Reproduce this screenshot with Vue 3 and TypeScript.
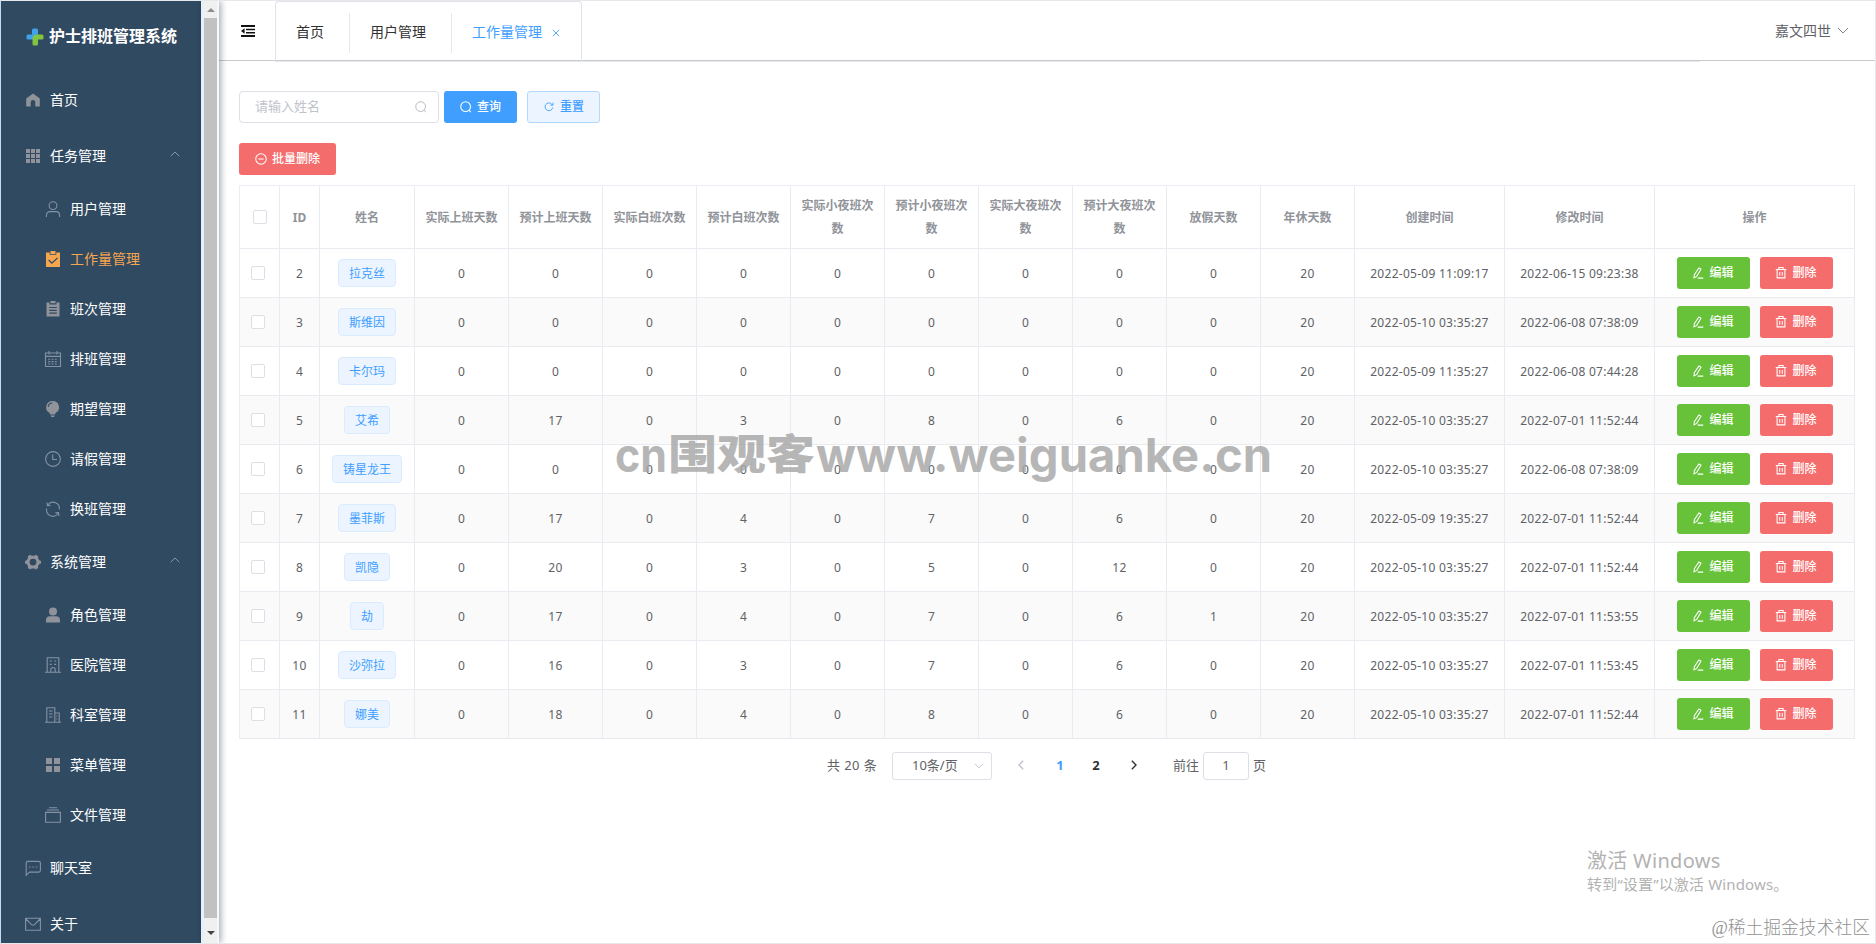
<script setup lang="ts">
import { ref } from 'vue'

interface MenuItem {
  label: string
  icon: string
  sub?: boolean
  group?: boolean
  active?: boolean
}

interface Row {
  id: number
  name: string
  counts: number[]
  created: string
  updated: string
}

const menu: MenuItem[] = [
  { label: '首页', icon: 'home' },
  { label: '任务管理', icon: 'grid', group: true },
  { label: '用户管理', icon: 'user', sub: true },
  { label: '工作量管理', icon: 'claim', sub: true, active: true },
  { label: '班次管理', icon: 'order', sub: true },
  { label: '排班管理', icon: 'date', sub: true },
  { label: '期望管理', icon: 'opportunity', sub: true },
  { label: '请假管理', icon: 'time', sub: true },
  { label: '换班管理', icon: 'refresh', sub: true },
  { label: '系统管理', icon: 'tools', group: true },
  { label: '角色管理', icon: 'userSolid', sub: true },
  { label: '医院管理', icon: 'school', sub: true },
  { label: '科室管理', icon: 'office', sub: true },
  { label: '菜单管理', icon: 'menu', sub: true },
  { label: '文件管理', icon: 'files', sub: true },
  { label: '聊天室', icon: 'chat' },
  { label: '关于', icon: 'message' },
]

const icons: Record<string, string> = {
  home: '<path fill="currentColor" d="M8 1.4 1.2 6.6v8h4.500V10.300a2.300 2.300 0 0 1 4.600 0v4.300h4.500v-8z"/>',
  grid: '<path fill="currentColor" d="M1 1h4v4H1zM6 1h4v4H6zM11 1h4v4h-4zM1 6h4v4H1zM6 6h4v4H6zM11 6h4v4h-4zM1 11h4v4H1zM6 11h4v4H6zM11 11h4v4h-4z"/>',
  user: '<circle cx="8" cy="4.600" r="3.900"/><path d="M1.400 16v-1.500c0-2.400 1.400-3.900 3.600-3.900h6c2.200 0 3.600 1.500 3.600 3.900V16"/>',
  claim: '<path fill="currentColor" fill-rule="evenodd" d="M5.500 0h5v3h-5zM1 1.400h3.700v2.400h6.600V1.400H15V16H1zM4 8.600l-.800.800 3.600 3.500 6.100-5.500-.700-.900-5.300 4.700z"/>',
  order: '<path fill="currentColor" fill-rule="evenodd" d="M5.500 0h5v2.200h-5zM1.500 1.600h3v1.800h7V1.600h3V15.500h-13zM4.200 6v1.100h7.600V6zM4.200 8.800v1.100h7.600V8.800zM4.200 11.600v1.100h7.600v-1.100z"/>',
  date: '<path d="M.5 2h15v13.500H.5zM.5 5.400h15M4 0v3.500M12 0v3.500"/><path stroke-dasharray="2 1.300" d="M3.200 8.200h10M3.200 10.600h10M3.200 13h10"/>',
  opportunity: '<path fill="currentColor" fill-rule="evenodd" d="M7.600 0a6.300 6.300 0 0 1 3.200 11.800L10 13.500H5.200l-.8-1.700A6.300 6.300 0 0 1 7.600 0zM7.400 1.400a5 5 0 0 0-4.800 4.500h1.100a4 4 0 0 1 3.700-3.400zM5.500 14.600h4.300L9 16H6.300z"/>',
  time: '<circle cx="8" cy="8" r="7.400"/><path d="M7.700 3.500v5h4.300"/>',
  refresh: '<path d="M3 3.800A6.300 6.300 0 0 1 14.300 8.500M13 12.500A6.300 6.300 0 0 1 1.700 7.500M2 1.500l.5 3.200 3.200-.2M14 15l-.5-3.500-3.200.3"/>',
  tools: '<path fill="currentColor" fill-rule="evenodd" d="m5.300.8 1.300 1h2.800l1.300-1 2.500 1.500-.2 1.800 1.300 2.200 1.700.7v2.400l-1.700.7-1.300 2.200.2 1.800-2.500 1.400-1.300-1H6.600l-1.300 1-2.500-1.400.2-1.800-1.300-2.200L0 9.400V7l1.700-.7L3 4.100l-.2-1.800zM8 4.700a3.400 3.400 0 1 0 0 6.800 3.400 3.400 0 0 0 0-6.800z"/>',
  userSolid: '<circle fill="currentColor" stroke="none" cx="8" cy="4.500" r="4"/><path fill="currentColor" stroke="none" d="M1 15.500v-2.200a4 4 0 0 1 4-4h6a4 4 0 0 1 4 4v2.200z"/>',
  school: '<path d="M2.200 15V.8h11.600V15M0 15.200h16M5.800 15v-2.300a2.200 2.200 0 0 1 4.400 0V15"/><path stroke-width="1.800" stroke-dasharray="2 2.500" d="M4.700 4h7M4.700 7.400h7"/>',
  office: '<path d="M1.800 15V.8h8V15M9.800 6h4.400v9M0 15.200h16M4 4h3.500M4 7h3.500M4 10h3.500M11.800 8.500v1M11.800 11.500v1"/>',
  menu: '<path fill="currentColor" d="M1 1h6v6H1zM9 1h6v6H9zM1 9h6v6H1zM9 9h6v6H9z"/>',
  files: '<path d="M.6 5.400h14.800v9.800H.6zM2 3h12M4 .8h8"/>',
  chat: '<path d="M1.200 15.300V3q0-1.600 1.600-1.600h11q1.600 0 1.600 1.600v7.500q0 1.600-1.600 1.600H4.600z"/><path stroke-width="1.500" d="M4 7h1.500M7.400 7h1.500M10.700 7h1.500"/>',
  message: '<path d="M.6 2.300h14.800v12H.6zM1 3l5.500 5.600q1.500 1.300 3 0L15 3"/>',
  search: '<circle cx="7.500" cy="7.500" r="6.500"/><path d="m12 12.200 2.500 2.800"/>',
  reset: '<path d="M14 8.800A6.200 6.200 0 1 1 12.300 3.300l1.500 1.500M14.300 1v4.100h-4"/>',
  remove: '<circle cx="8" cy="8" r="7"/><path d="M4.500 8h7"/>',
  edit: '<path d="M9.200 1.200 12 3 6.300 12.500l-3.600 2 .4-4.300zM7.500 14.800h7.500"/>',
  trash: '<path d="M1 3.300h14M5.200 3V.7h5.600V3M2.800 3.500v11h10.400v-11M6.300 6.500v5M9.700 6.500v5"/>',
}

const headers = [
  'ID', '姓名', '实际上班天数', '预计上班天数', '实际白班次数', '预计白班次数',
  '实际小夜班次数', '预计小夜班次数', '实际大夜班次数', '预计大夜班次数',
  '放假天数', '年休天数', '创建时间', '修改时间', '操作',
]

const rows: Row[] = [
  { id: 2, name: '拉克丝', counts: [0, 0, 0, 0, 0, 0, 0, 0, 0, 20], created: '2022-05-09 11:09:17', updated: '2022-06-15 09:23:38' },
  { id: 3, name: '斯维因', counts: [0, 0, 0, 0, 0, 0, 0, 0, 0, 20], created: '2022-05-10 03:35:27', updated: '2022-06-08 07:38:09' },
  { id: 4, name: '卡尔玛', counts: [0, 0, 0, 0, 0, 0, 0, 0, 0, 20], created: '2022-05-09 11:35:27', updated: '2022-06-08 07:44:28' },
  { id: 5, name: '艾希', counts: [0, 17, 0, 3, 0, 8, 0, 6, 0, 20], created: '2022-05-10 03:35:27', updated: '2022-07-01 11:52:44' },
  { id: 6, name: '铸星龙王', counts: [0, 0, 0, 0, 0, 0, 0, 0, 0, 20], created: '2022-05-10 03:35:27', updated: '2022-06-08 07:38:09' },
  { id: 7, name: '墨菲斯', counts: [0, 17, 0, 4, 0, 7, 0, 6, 0, 20], created: '2022-05-09 19:35:27', updated: '2022-07-01 11:52:44' },
  { id: 8, name: '凯隐', counts: [0, 20, 0, 3, 0, 5, 0, 12, 0, 20], created: '2022-05-10 03:35:27', updated: '2022-07-01 11:52:44' },
  { id: 9, name: '劫', counts: [0, 17, 0, 4, 0, 7, 0, 6, 1, 20], created: '2022-05-10 03:35:27', updated: '2022-07-01 11:53:55' },
  { id: 10, name: '沙弥拉', counts: [0, 16, 0, 3, 0, 7, 0, 6, 0, 20], created: '2022-05-10 03:35:27', updated: '2022-07-01 11:53:45' },
  { id: 11, name: '娜美', counts: [0, 18, 0, 4, 0, 8, 0, 6, 0, 20], created: '2022-05-10 03:35:27', updated: '2022-07-01 11:52:44' },
]

const keyword = ref('')
const page = ref('1')
</script>

<template>
  <div class="app">
    <aside class="sidebar">
      <div class="brand">
        <svg class="logo" viewBox="0 0 18 18">
          <path fill="#3fa2ea" d="M6 2q0-1.500 1.500-1.500h3Q12 .5 12 2v4.500L7 11.500H2Q.5 11.500.5 10V8Q.5 6.500 2 6.500h4z" />
          <path fill="#83c341" d="M6.500 16V11q0-4.500 4.500-4.500h5q1.500 0 1.500 1.500v2q0 1.500-1.500 1.500h-4V16q0 1.500-1.500 1.500H8Q6.500 17.500 6.500 16z" />
        </svg>
        <span class="brand-name">护士排班管理系统</span>
      </div>
      <nav>
        <div v-for="m in menu" :key="m.label" class="item" :class="{ sub: m.sub, active: m.active }">
          <svg class="micon" viewBox="0 0 16 16" v-html="icons[m.icon]" />
          <span class="mlabel">{{ m.label }}</span>
          <svg v-if="m.group" class="caret" viewBox="0 0 10 6"><path d="M.7 5.200 5 1l4.300 4.200" /></svg>
        </div>
      </nav>
    </aside>
    <div class="scroll">
      <svg class="sarrow up" viewBox="0 0 8 4"><path d="M0 4 4 0l4 4z" /></svg>
      <div class="thumb"></div>
      <svg class="sarrow down" viewBox="0 0 8 4"><path d="M0 0h8L4 4z" /></svg>
    </div>

    <main class="main">
      <header class="topbar">
        <svg class="fold" viewBox="0 0 14 12">
          <path d="M0 0h14v1.900H0zM5 3.700h9v1.500H5zM5 6.900h9v1.500H5zM0 10.100h14V12H0zM0 6l3.600-2.700v5.400z" />
        </svg>
        <div class="tabs">
          <div class="tablist">
            <div class="tab">首页</div>
            <div class="tab">用户管理</div>
            <div class="tab on">工作量管理<svg class="close" viewBox="0 0 8 8"><path d="m.8.8 6.400 6.400M7.200.8.8 7.200" /></svg></div>
          </div>
        </div>
        <div class="account">嘉文四世<svg class="down-caret" viewBox="0 0 12 7"><path d="m1 1 5 5 5-5" /></svg></div>
      </header>

      <section class="content">
        <div class="search">
          <div class="field">
            <input v-model="keyword" placeholder="请输入姓名">
            <svg class="ic big" viewBox="0 0 16 16" v-html="icons.search" />
          </div>
          <button class="btn primary"><svg class="ic" viewBox="0 0 16 16" v-html="icons.search" />查询</button>
          <button class="btn plain"><svg class="ic small" viewBox="0 0 16 16" v-html="icons.reset" />重置</button>
        </div>
        <button class="btn danger batch"><svg class="ic" viewBox="0 0 16 16" v-html="icons.remove" />批量删除</button>

        <table class="grid">
          <colgroup>
            <col class="w40"><col class="w40"><col class="w95">
            <col v-for="n in 10" :key="n" class="w94">
            <col class="w150"><col class="w150"><col class="w200">
          </colgroup>
          <thead>
            <tr>
              <th><span class="box head"></span></th>
              <th v-for="h in headers" :key="h">{{ h }}</th>
            </tr>
          </thead>
          <tbody>
            <tr v-for="r in rows" :key="r.id">
              <td><span class="box"></span></td>
              <td>{{ r.id }}</td>
              <td><span class="tag">{{ r.name }}</span></td>
              <td v-for="(c, i) in r.counts" :key="i">{{ c }}</td>
              <td>{{ r.created }}</td>
              <td>{{ r.updated }}</td>
              <td>
                <div class="ops">
                  <button class="btn success"><svg class="ic" viewBox="0 0 16 16" v-html="icons.edit" />编辑</button>
                  <button class="btn danger"><svg class="ic" viewBox="0 0 16 16" v-html="icons.trash" />删除</button>
                </div>
              </td>
            </tr>
          </tbody>
        </table>

        <div class="pager">
          <span class="total">共 20 条</span>
          <div class="select">10条/页<svg viewBox="0 0 10 6"><path d="m1 .8 4 4 4-4" /></svg></div>
          <svg class="nav prev" viewBox="0 0 6 10"><path d="M5.200.8 1 5l4.200 4.200" /></svg>
          <span class="num cur">1</span>
          <span class="num">2</span>
          <svg class="nav next" viewBox="0 0 6 10"><path d="M.8.8 5 5 .8 9.200" /></svg>
          <span class="jump">前往</span>
          <input v-model="page" class="pageno">
          <span>页</span>
        </div>
      </section>
    </main>

    <svg class="mark" viewBox="0 0 660 70">
      <text x="0" y="46" font-size="47" textLength="52" lengthAdjust="spacingAndGlyphs">cn</text>
      <text class="cjk" transform="translate(53 43) scale(1 .84)" x="0" y="0" font-size="49" textLength="147" lengthAdjust="spacingAndGlyphs">围观客</text>
      <text x="201" y="46" font-size="47" textLength="456" lengthAdjust="spacingAndGlyphs">www.weiguanke.cn</text>
    </svg>
    <div class="activate">
      <div class="a1">激活 Windows</div>
      <div class="a2">转到“设置”以激活 Windows。</div>
    </div>
    <div class="credit">@稀土掘金技术社区</div>
  </div>
</template>

<style>
body {
  margin: 0;
  background: #fff;
}
</style>

<style scoped>
.app {
  position: relative;
  display: flex;
  box-sizing: border-box;
  width: 1876px;
  height: 944px;
  overflow: hidden;
  border: 1px solid #e6e8eb;
  border-left-color: #c3dcf0;
  background: #fff;
  font-family: "Noto Sans", "Noto Sans CJK SC", sans-serif;
  font-size: 12px;
  color: #606266;
}
svg {
  flex: none;
  display: block;
  fill: none;
}
.sidebar {
  flex: none;
  width: 200px;
  overflow: hidden;
  background: #304a62;
  color: #fff;
}
.brand {
  display: flex;
  align-items: center;
  height: 71px;
  box-sizing: border-box;
  padding: 0 0 0 25px;
  font-size: 16px;
  font-weight: 700;
  line-height: 24px;
  white-space: nowrap;
}
.brand-name {
  padding-bottom: 2px;
}
.logo {
  width: 18px;
  height: 18px;
  margin-right: 5px;
}
.item {
  display: flex;
  align-items: center;
  height: 56px;
  padding-left: 24px;
  font-size: 14px;
  line-height: 20px;
}
.item.sub {
  height: 50px;
  padding-left: 44px;
}
.micon {
  width: 16px;
  height: 16px;
  margin-right: 9px;
  color: #909399;
  overflow: visible;
}
.micon :deep(path:not([fill])),
.micon :deep(circle:not([fill])) {
  stroke: #8493a2;
  stroke-width: 1.1;
}
.mlabel {
  flex: 1;
}
.active,
.active .micon {
  color: #f7a650;
}
.caret {
  width: 10px;
  height: 6px;
  margin: -4px 21px 0 0;
  stroke: #8b98a6;
}
.scroll {
  flex: none;
  display: flex;
  flex-direction: column;
  align-items: center;
  box-sizing: border-box;
  width: 18px;
  padding: 7px 2px 0 3px;
  background: linear-gradient(90deg, #e6f0f8 0 3px, #f0f0f0 3px 16px, #f8f8f8 16px);
  box-shadow: 2px 0 6px rgba(0, 21, 41, 0.35);
  z-index: 1;
}
.sarrow {
  width: 8px;
  height: 4px;
}
.up {
  fill: #8f8f8f;
}
.down {
  fill: #444;
  margin-top: 13px;
}
.thumb {
  width: 13px;
  height: 900px;
  margin-top: 6px;
  background: #c1c1c1;
}
.main {
  flex: 1;
  min-width: 0;
}
.topbar {
  display: flex;
  align-items: center;
  height: 60px;
  border-bottom: 1px solid #c8cacd;
  box-sizing: border-box;
  padding-left: 22px;
}
.fold {
  width: 14px;
  height: 12px;
  margin-top: 1px;
  fill: #111;
}
.tabs {
  align-self: flex-start;
  width: 1425px;
  height: 60px;
  margin-left: 20px;
  border-bottom: 1px solid #e4e7ed;
}
.tablist {
  display: flex;
  align-items: center;
  box-sizing: border-box;
  width: 307px;
  height: 60px;
  border: 1px solid #e0e3e8;
  border-bottom: 0;
  border-radius: 4px 4px 0 0;
}
.tab {
  display: flex;
  align-items: center;
  box-sizing: border-box;
  height: 40px;
  padding: 0 20px 3px;
  margin-top: 2px;
  border-left: 1px solid #e4e7ed;
  font-size: 14px;
  color: #303133;
  white-space: nowrap;
}
.tab:first-child {
  border-left: 0;
  width: 73px;
}
.tab:nth-child(2) {
  width: 102px;
}
.on {
  color: #409eff;
}
.close {
  width: 8px;
  height: 8px;
  margin-left: 10px;
  margin-top: 3px;
  stroke: #5aa8f5;
}
.account {
  display: flex;
  align-items: center;
  margin: 0 26px 0 auto;
  font-size: 14px;
  line-height: 20px;
}
.down-caret {
  width: 12px;
  height: 7px;
  margin-left: 6px;
  stroke: #85878c;
}
.content {
  padding: 30px 20px 0;
}
.search {
  display: flex;
  align-items: center;
}
.field {
  display: flex;
  align-items: center;
  box-sizing: border-box;
  width: 200px;
  height: 32px;
  padding: 0 11px 0 15px;
  margin-right: 5px;
  border: 1px solid #dcdfe6;
  border-radius: 4px;
  color: #b4b8bf;
}
input {
  min-width: 0;
  padding: 0;
  border: 0;
  outline: 0;
  background: none;
  font: 13px "Noto Sans", "Noto Sans CJK SC", sans-serif;
  color: #606266;
}
.field input {
  flex: 1;
  padding-bottom: 2px;
}
input::placeholder {
  color: #bfc3ca;
}
.ic {
  width: 12px;
  height: 12px;
  margin-right: 5px;
  stroke: currentColor;
  stroke-width: 1.400;
  overflow: visible;
}
.small {
  width: 10px;
  height: 10px;
  margin: 0 6px 0 1px;
}
.big {
  margin: 0;
  stroke-width: 1.300;
}
.btn {
  display: flex;
  align-items: center;
  justify-content: center;
  flex: none;
  box-sizing: border-box;
  width: 73px;
  height: 32px;
  padding: 0;
  border: 0;
  border-radius: 3px;
  color: #fff;
  font: 500 12px/16px "Noto Sans", "Noto Sans CJK SC", sans-serif;
}
.primary {
  background: #409eff;
}
.plain {
  margin-left: 10px;
  border: 1px solid #b3d8ff;
  background: #ecf5ff;
  color: #409eff;
}
.success {
  background: #67c23a;
}
.danger {
  background: #f56c6c;
}
.batch {
  width: 97px;
  margin: 20px 0 10px;
}
.grid {
  width: 1616px;
  table-layout: fixed;
  border-collapse: separate;
  border-spacing: 0;
  border-top: 1px solid #ebeef5;
  border-left: 1px solid #ebeef5;
}
.w40 { width: 40px; }
.w94 { width: 94px; }
.w95 { width: 95px; }
.w150 { width: 150px; }
.w200 { width: 200px; }
th,
td {
  box-sizing: border-box;
  border-right: 1px solid #e8ebf0;
  border-bottom: 1px solid #e8ebf0;
  text-align: center;
  vertical-align: middle;
}
th {
  height: 63px;
  padding: 0 10px;
  line-height: 23px;
  font-weight: 700;
  color: #909399;
}
th:nth-child(-n + 2) {
  padding: 0;
}
td {
  height: 49px;
  padding: 0;
  line-height: 23px;
  letter-spacing: 0.27px;
}
tbody tr:nth-child(even) td {
  background: #fafafa;
}
.box {
  display: block;
  box-sizing: border-box;
  width: 14px;
  height: 14px;
  margin-left: 11px;
  border: 1px solid #dcdfe6;
  border-radius: 2px;
  background: #fff;
}
.head {
  margin-left: 13px;
}
.tag {
  display: inline-block;
  box-sizing: border-box;
  height: 28px;
  padding: 1px 10px 0;
  border: 1px solid #d9ecff;
  border-radius: 4px;
  background: #ecf5ff;
  color: #409eff;
  line-height: 26px;
  letter-spacing: 0;
  vertical-align: middle;
}
.ops {
  display: flex;
  justify-content: center;
  gap: 10px;
}
.pager {
  display: flex;
  align-items: center;
  height: 28px;
  margin-top: 13px;
  padding-left: 588px;
  font-size: 13px;
  line-height: 26px;
}
.total {
  width: 65px;
  letter-spacing: 0.4px;
}
.select {
  display: flex;
  align-items: center;
  justify-content: space-between;
  box-sizing: border-box;
  width: 100px;
  height: 28px;
  padding: 0 7px 2px 19px;
  border: 1px solid #dcdfe6;
  border-radius: 3px;
}
.select svg {
  width: 10px;
  height: 6px;
  margin-top: 2px;
  stroke: #c0c4cc;
}
.nav {
  width: 6px;
  height: 10px;
  margin-bottom: 2px;
  stroke-width: 1.400;
}
.prev {
  margin-left: 26px;
  margin-right: 18px;
  stroke: #c0c4cc;
}
.next {
  margin-left: 17px;
  margin-right: 36px;
  stroke: #303133;
}
.num {
  width: 36px;
  text-align: center;
  font-weight: 700;
  color: #303133;
}
.num,
.total,
.jump,
.jump ~ span {
  padding-bottom: 2px;
}
.cur {
  color: #409eff;
}
.pageno {
  box-sizing: border-box;
  width: 46px;
  height: 28px;
  margin: 0 4px;
  padding-bottom: 2px;
  border: 1px solid #dcdfe6;
  border-radius: 3px;
  text-align: center;
}
.mark {
  position: absolute;
  left: 614px;
  top: 425px;
  width: 660px;
  height: 70px;
  overflow: visible;
  fill: rgba(166, 166, 166, 0.82);
  font-family: Inter, sans-serif;
  font-weight: 700;
}
.cjk {
  font-family: "Noto Sans CJK SC", sans-serif;
  font-weight: 900;
}
.activate {
  position: absolute;
  left: 1586px;
  top: 846px;
  color: #b2b2b2;
  white-space: nowrap;
}
.a1 {
  font-size: 20px;
  line-height: 28px;
  letter-spacing: 0.3px;
}
.a2 {
  font-size: 15px;
  line-height: 18px;
  letter-spacing: 0.15px;
}
.credit {
  position: absolute;
  right: 5px;
  top: 914px;
  font: 300 17.800px/26px "Liberation Serif", "Noto Sans CJK SC", serif;
  color: #929292;
}
</style>
